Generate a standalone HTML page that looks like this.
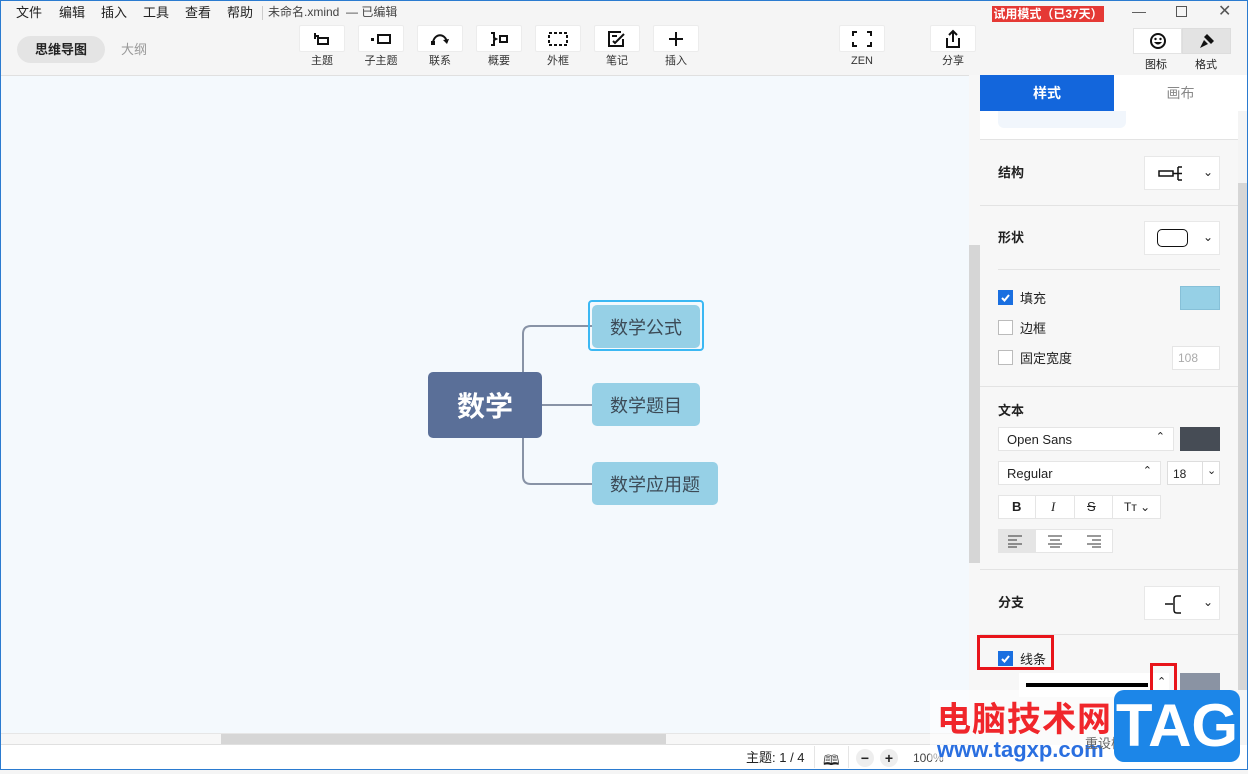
<!DOCTYPE html>
<html><head><meta charset="utf-8"><style>
*{box-sizing:border-box;margin:0;padding:0}
body{width:1248px;height:770px;overflow:hidden;position:relative;background:#f5f5f5;font-family:"Liberation Sans","Noto Sans CJK SC",sans-serif;color:#222}
.a{position:absolute}
.menu{font-size:13px;top:6px;line-height:1}
.tb{position:absolute;top:25px;width:46px;height:27px;background:#fff;border:1px solid #ececec;border-radius:2px;display:flex;align-items:center;justify-content:center}
.tl{position:absolute;top:56px;font-size:11px;color:#333;width:60px;text-align:center;line-height:1}
.sec{position:absolute;left:980px;width:258px;border-top:1px solid #e3e3e3}
.lab{position:absolute;font-size:13px;font-weight:bold;color:#222;line-height:1}
.dd{position:absolute;background:#fff;border:1px solid #e8e8e8;width:76px;height:34px}
.cb{position:absolute;width:15px;height:15px;border:1px solid #bbb;background:#fff}
.cb.on{background:#1a6fe0;border-color:#1a6fe0}
.t13{position:absolute;font-size:13px;color:#222;line-height:1}
.box{position:absolute;background:#fff;border:1px solid #e5e5e5}
.node{position:absolute;background:#96d0e6;border-radius:5px;color:#3c4a56;font-size:18px;display:flex;align-items:center;justify-content:center}
</style></head><body>
<div class="a" style="left:0;top:0;width:1248px;height:770px;border:1px solid #2b7bd0;z-index:50;pointer-events:none"></div>
<div class="a menu" style="left:16px">文件</div>
<div class="a menu" style="left:59px">编辑</div>
<div class="a menu" style="left:101px">插入</div>
<div class="a menu" style="left:143px">工具</div>
<div class="a menu" style="left:185px">查看</div>
<div class="a menu" style="left:227px">帮助</div>
<div class="a" style="left:262px;top:6px;width:1px;height:14px;background:#ccc"></div>
<div class="a" style="left:268px;top:6px;font-size:12px;color:#444;line-height:1">未命名.xmind &nbsp;— 已编辑</div>
<div class="a" style="left:17px;top:36px;width:88px;height:27px;background:#e4e4e4;border-radius:14px;font-size:13px;font-weight:bold;text-align:center;line-height:27px">思维导图</div>
<div class="a" style="left:121px;top:43px;font-size:13px;color:#999;line-height:1">大纲</div>

<div class="tb" style="left:299px"><svg width="22" height="16"><path d="M4 2v6M4 5h4M7 7h10v6H7z" fill="none" stroke="#111" stroke-width="2"/></svg></div>
<div class="tl" style="left:292px">主题</div>
<div class="tb" style="left:358px"><svg width="22" height="16"><rect x="1" y="7" width="3" height="3" fill="#111"/><rect x="8" y="4" width="12" height="8" fill="none" stroke="#111" stroke-width="2"/></svg></div>
<div class="tl" style="left:351px">子主题</div>
<div class="tb" style="left:417px"><svg width="22" height="16"><path d="M4 11c2-9 12-9 14 0" fill="none" stroke="#111" stroke-width="2"/><path d="M14 9l4 4 2-5" fill="#111"/><rect x="2" y="10" width="4" height="4" fill="#111"/></svg></div>
<div class="tl" style="left:410px">联系</div>
<div class="tb" style="left:476px"><svg width="22" height="16"><path d="M3 2h3v5l2 1-2 1v5H3" fill="none" stroke="#111" stroke-width="2"/><rect x="12" y="5" width="7" height="6" fill="none" stroke="#111" stroke-width="2"/></svg></div>
<div class="tl" style="left:469px">概要</div>
<div class="tb" style="left:535px"><svg width="22" height="16"><rect x="2" y="2" width="18" height="12" fill="none" stroke="#111" stroke-width="2" stroke-dasharray="3 2"/></svg></div>
<div class="tl" style="left:528px">外框</div>
<div class="tb" style="left:594px"><svg width="22" height="18"><path d="M15 2H3v14h14V9" fill="none" stroke="#111" stroke-width="2"/><path d="M7 11l2 2 9-9" fill="none" stroke="#111" stroke-width="2"/><path d="M6 6h5" stroke="#111" stroke-width="2"/></svg></div>
<div class="tl" style="left:587px">笔记</div>
<div class="tb" style="left:653px"><svg width="22" height="18"><path d="M11 2v14M4 9h14" stroke="#111" stroke-width="2"/></svg></div>
<div class="tl" style="left:646px">插入</div>
<div class="tb" style="left:839px"><svg width="22" height="18"><path d="M2 6V2h4M16 2h4v4M20 12v4h-4M6 16H2v-4" fill="none" stroke="#111" stroke-width="2"/></svg></div>
<div class="tl" style="left:832px">ZEN</div>
<div class="tb" style="left:930px"><svg width="22" height="20"><path d="M11 13V2M7 6l4-4 4 4M5 9v9h12V9" fill="none" stroke="#111" stroke-width="2"/></svg></div>
<div class="tl" style="left:923px">分享</div>

<div class="a" style="left:992px;top:6px;width:112px;height:16px;background:#e53935;color:#fff;font-size:12px;font-weight:bold;text-align:center;line-height:16px">试用模式（已37天）</div>
<div class="a" style="left:1132px;top:3px;font-size:14px;color:#555">—</div>
<div class="a" style="left:1176px;top:6px;width:11px;height:11px;border:1px solid #555"></div>
<div class="a" style="left:1218px;top:1px;font-size:16px;color:#555">✕</div>
<div class="a" style="left:1133px;top:28px;width:49px;height:26px;background:#fff;border:1px solid #e3e3e3;display:flex;align-items:center;justify-content:center"><svg width="18" height="18"><circle cx="9" cy="9" r="7" fill="none" stroke="#111" stroke-width="2"/><circle cx="6.5" cy="7" r="1.2" fill="#111"/><circle cx="11.5" cy="7" r="1.2" fill="#111"/><path d="M5 10q4 5 8 0z" fill="#111"/></svg></div>
<div class="a" style="left:1182px;top:28px;width:49px;height:26px;background:#e3e3e3;border:1px solid #ddd;display:flex;align-items:center;justify-content:center"><svg width="18" height="18"><path d="M9 2l7 7-3 3-7-7z" fill="#111"/><path d="M6 8l-4 8 8-4z" fill="#111"/></svg></div>
<div class="a" style="left:1145px;top:60px;font-size:11px;line-height:1">图标</div>
<div class="a" style="left:1195px;top:60px;font-size:11px;line-height:1">格式</div>

<div class="a" style="left:1px;top:75px;width:968px;height:658px;background:#f4f9fd;border-top:1px solid #e0e0e0"></div>
<div class="a" style="left:969px;top:75px;width:11px;height:658px;background:#f7f7f7"></div>
<div class="a" style="left:969px;top:245px;width:11px;height:318px;background:#d6d6d6"></div>
<div class="a" style="left:1px;top:733px;width:968px;height:12px;background:#f7f7f7;border-top:1px solid #e6e6e6;border-bottom:1px solid #e0e0e0"></div>
<div class="a" style="left:221px;top:734px;width:445px;height:10px;background:#d6d6d6"></div>
<div class="a" style="left:1px;top:745px;width:1246px;height:24px;background:#fff"></div>
<div class="a" style="left:746px;top:751px;font-size:13px;line-height:1">主题: 1 / 4</div>
<div class="a" style="left:814px;top:746px;width:1px;height:22px;background:#e5e5e5"></div>
<div class="a" style="left:823px;top:750px;font-size:14px">🕮</div>
<div class="a" style="left:848px;top:746px;width:1px;height:22px;background:#e5e5e5"></div>
<div class="a" style="left:856px;top:749px;width:18px;height:18px;border-radius:9px;background:#eee;text-align:center;font-size:14px;font-weight:bold;line-height:18px">−</div>
<div class="a" style="left:880px;top:749px;width:18px;height:18px;border-radius:9px;background:#eee;text-align:center;font-size:14px;font-weight:bold;line-height:18px">+</div>
<div class="a" style="left:913px;top:752px;font-size:12px;color:#444;line-height:1">100%</div>

<svg class="a" style="left:0;top:0" width="970" height="733"><path d="M542 405H592M592 326H531q-8 0-8 8V476q0 8 8 8H592" fill="none" stroke="#8893a6" stroke-width="2"/></svg>
<div class="a" style="left:428px;top:372px;width:114px;height:66px;background:#5a6f98;border-radius:5px;color:#fff;font-size:28px;font-weight:bold;display:flex;align-items:center;justify-content:center">数学</div>
<div class="a" style="left:588px;top:300px;width:116px;height:51px;border:2px solid #3bb8f3;border-radius:4px"></div>
<div class="node" style="left:592px;top:305px;width:108px;height:43px">数学公式</div>
<div class="node" style="left:592px;top:383px;width:108px;height:43px">数学题目</div>
<div class="node" style="left:592px;top:462px;width:126px;height:43px">数学应用题</div>

<div class="a" style="left:980px;top:75px;width:267px;height:670px;background:#f7f7f7"></div>
<div class="a" style="left:980px;top:75px;width:134px;height:36px;background:#1366dc;color:#fff;font-size:14px;font-weight:bold;text-align:center;line-height:36px">样式</div>
<div class="a" style="left:1114px;top:75px;width:133px;height:36px;background:#fff;color:#888;font-size:14px;text-align:center;line-height:36px">画布</div>
<div class="a" style="left:980px;top:111px;width:258px;height:28px;background:#fff"></div>
<div class="a" style="left:998px;top:111px;width:128px;height:17px;background:#f1f6fc;border-radius:0 0 6px 6px"></div>
<div class="a" style="left:1238px;top:111px;width:9px;height:634px;background:#f4f4f4"></div>
<div class="a" style="left:1238px;top:183px;width:9px;height:507px;background:#d6d6d6"></div>
<div class="sec" style="top:139px"></div>
<div class="lab" style="left:998px;top:166px">结构</div>
<div class="dd" style="left:1144px;top:156px"><svg class="a" style="left:12px;top:8px" width="30" height="18"><rect x="2" y="6" width="14" height="5" fill="none" stroke="#111" stroke-width="1.5"/><path d="M16 8.5h5M21 2v13M21 2h4M21 8.5h4M21 15h4" fill="none" stroke="#111" stroke-width="1.5"/></svg><span class="a" style="left:58px;top:8px;font-size:12px">⌄</span></div>
<div class="sec" style="top:205px"></div>
<div class="lab" style="left:998px;top:231px">形状</div>
<div class="dd" style="left:1144px;top:221px"><div class="a" style="left:12px;top:7px;width:31px;height:18px;border:1.5px solid #111;border-radius:5px"></div><span class="a" style="left:58px;top:8px;font-size:12px">⌄</span></div>
<div class="a" style="left:998px;top:269px;width:222px;height:1px;background:#e3e3e3"></div>
<div class="cb on" style="left:998px;top:290px"><svg width="13" height="13"><path d="M3 7l2.5 2.5L10 4" fill="none" stroke="#fff" stroke-width="2"/></svg></div>
<div class="t13" style="left:1020px;top:292px">填充</div>
<div class="a" style="left:1180px;top:286px;width:40px;height:24px;background:#96d0e6;border:1px solid #86c0d8"></div>
<div class="cb" style="left:998px;top:320px"></div>
<div class="t13" style="left:1020px;top:322px">边框</div>
<div class="cb" style="left:998px;top:350px"></div>
<div class="t13" style="left:1020px;top:352px">固定宽度</div>
<div class="box" style="left:1172px;top:346px;width:48px;height:24px;font-size:12px;color:#aaa;padding:5px 0 0 5px;line-height:1.1">108</div>
<div class="sec" style="top:386px"></div>
<div class="lab" style="left:998px;top:404px">文本</div>
<div class="box" style="left:998px;top:427px;width:176px;height:24px;font-size:13px;padding:5px 0 0 8px;line-height:1">Open Sans<span class="a" style="right:8px;top:4px;font-size:11px">⌃</span></div>
<div class="a" style="left:1180px;top:427px;width:40px;height:24px;background:#464c55"></div>
<div class="box" style="left:998px;top:461px;width:163px;height:24px;font-size:13px;padding:5px 0 0 8px;line-height:1">Regular<span class="a" style="right:8px;top:4px;font-size:11px">⌃</span></div>
<div class="box" style="left:1167px;top:461px;width:53px;height:24px;font-size:12px;padding:6px 0 0 5px;border-color:#ddd;line-height:1">18<div class="a" style="left:34px;top:0;width:1px;height:22px;background:#ddd"></div><span class="a" style="left:39px;top:4px;font-size:11px">⌄</span></div>
<div class="box" style="left:998px;top:495px;width:163px;height:24px"></div>
<div class="a" style="left:1035px;top:496px;width:1px;height:22px;background:#e5e5e5"></div>
<div class="a" style="left:1074px;top:496px;width:1px;height:22px;background:#e5e5e5"></div>
<div class="a" style="left:1112px;top:496px;width:1px;height:22px;background:#e5e5e5"></div>
<div class="a" style="left:1012px;top:499px;font-size:13px;font-weight:bold">B</div>
<div class="a" style="left:1051px;top:499px;font-size:13px;font-style:italic;font-family:'Liberation Serif',serif">I</div>
<div class="a" style="left:1087px;top:499px;font-size:13px;text-decoration:line-through">S</div>
<div class="a" style="left:1124px;top:500px;font-size:12px">Tт ⌄</div>
<div class="box" style="left:998px;top:529px;width:115px;height:24px"></div>
<div class="a" style="left:999px;top:530px;width:37px;height:22px;background:#e5e5e5"></div>
<svg class="a" style="left:1008px;top:534px" width="100" height="14"><path d="M0 2h14M0 6h9M0 10h14M0 13h9" stroke="#333"/><path d="M40 2h14M42 6h10M40 10h14M42 13h10" stroke="#333"/><path d="M79 2h14M84 6h9M79 10h14M84 13h9" stroke="#333"/></svg>
<div class="sec" style="top:569px"></div>
<div class="lab" style="left:998px;top:596px">分支</div>
<div class="dd" style="left:1144px;top:586px"><svg class="a" style="left:18px;top:6px" width="24" height="24"><path d="M2 11h8M18 3h-4q-3 0-3 3v11q0 3 3 3h4" fill="none" stroke="#111" stroke-width="1.5"/></svg><span class="a" style="left:58px;top:8px;font-size:12px">⌄</span></div>
<div class="sec" style="top:634px"></div>
<div class="a" style="left:977px;top:635px;width:77px;height:35px;border:3px solid #e8141a"></div>
<div class="cb on" style="left:998px;top:651px"><svg width="13" height="13"><path d="M3 7l2.5 2.5L10 4" fill="none" stroke="#fff" stroke-width="2"/></svg></div>
<div class="t13" style="left:1020px;top:653px">线条</div>
<div class="a" style="left:1019px;top:673px;width:150px;height:24px;background:#fff"></div>
<div class="a" style="left:1026px;top:683px;width:122px;height:4px;background:#000"></div>
<div class="a" style="left:1157px;top:675px;font-size:11px">⌃</div>
<div class="a" style="left:1150px;top:663px;width:27px;height:34px;border:3px solid #e8141a"></div>
<div class="a" style="left:1180px;top:673px;width:40px;height:24px;background:#8a93a3"></div>

<div class="a" style="left:930px;top:690px;width:200px;height:70px;background:rgba(255,255,255,0.55)"></div>
<div class="a" style="left:937px;top:692px;font-size:34px;font-weight:bold;color:#f0262b;letter-spacing:1px">电脑技术网</div>
<div class="a" style="left:937px;top:737px;font-size:22px;color:#2a6fe0;font-weight:bold">www.tagxp.com</div>
<div class="a" style="left:1085px;top:733px;font-size:13px;color:#666">重设样式</div>
<div class="a" style="left:1114px;top:690px;width:126px;height:72px;background:#1c86e8;border-radius:10px;color:#fff;font-size:60px;font-weight:bold;text-align:center;line-height:72px">TAG</div>
</body></html>
